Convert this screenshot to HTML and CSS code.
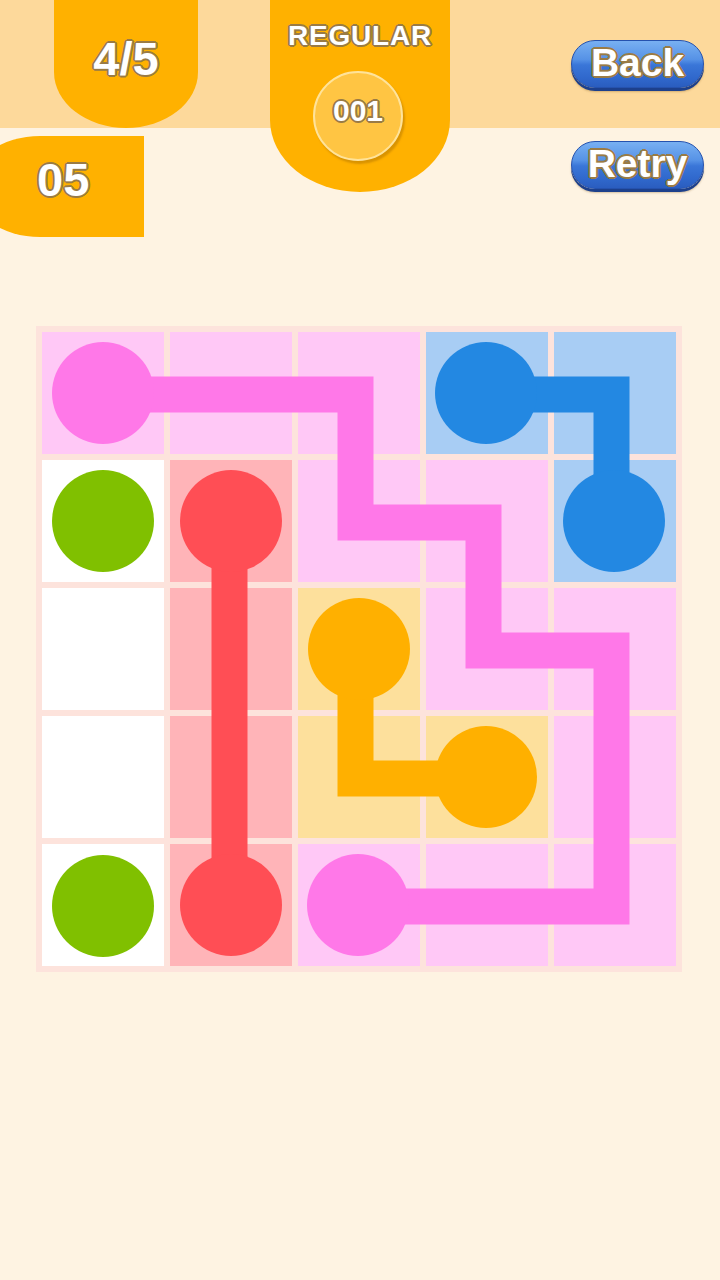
FILE: index.html
```html
<!DOCTYPE html>
<html>
<head>
<meta charset="utf-8">
<link rel="stylesheet" href="styles.css">
</head>
<body>
<header class="top">
  <div class="left">
    <div class="tab-score outlined">4/5</div>
    <div class="tab-moves outlined">05</div>
  </div>
  <div class="tab-level">
    <div class="level-name outlined">REGULAR</div>
    <div class="level-num"><span class="outlined">001</span></div>
  </div>
  <div class="buttons">
    <div class="btn"><span class="outlined">Back</span></div>
    <div class="btn"><span class="outlined">Retry</span></div>
  </div>
</header>

<main class="board">
  <div class="grid">
    <div class="cell pink"></div><div class="cell pink"></div><div class="cell pink"></div><div class="cell blue"></div><div class="cell blue"></div>
    <div class="cell white"></div><div class="cell red"></div><div class="cell pink"></div><div class="cell pink"></div><div class="cell blue"></div>
    <div class="cell white"></div><div class="cell red"></div><div class="cell yellow"></div><div class="cell pink"></div><div class="cell pink"></div>
    <div class="cell white"></div><div class="cell red"></div><div class="cell yellow"></div><div class="cell yellow"></div><div class="cell pink"></div>
    <div class="cell white"></div><div class="cell red"></div><div class="cell pink"></div><div class="cell pink"></div><div class="cell pink"></div>
    <svg class="paths" viewBox="0 0 646 646" width="646" height="646">
      <g fill="none" stroke-width="36" stroke-linejoin="miter" stroke-linecap="butt" transform="translate(-1.5 1.5)">
        <polyline stroke="#ff78e8" points="67,67 321,67 321,195 449,195 449,323 577,323 577,579 321,579"/>
        <polyline stroke="#2388e2" points="449,67 577,67 577,195"/>
        <polyline stroke="#ff4e55" points="195,195 195,579"/>
        <polyline stroke="#ffb000" points="321,323 321,451 449,451"/>
      </g>
      <g>
        <circle cx="67" cy="67" r="51" fill="#ff78e8"/>
        <circle cx="322" cy="579" r="51" fill="#ff78e8"/>
        <circle cx="450" cy="67" r="51" fill="#2388e2"/>
        <circle cx="578" cy="195" r="51" fill="#2388e2"/>
        <circle cx="195" cy="195" r="51" fill="#ff4e55"/>
        <circle cx="195" cy="579" r="51" fill="#ff4e55"/>
        <circle cx="323" cy="323" r="51" fill="#ffb000"/>
        <circle cx="450" cy="451" r="51" fill="#ffb000"/>
        <circle cx="67" cy="195" r="51" fill="#80c000"/>
        <circle cx="67" cy="580" r="51" fill="#80c000"/>
      </g>
    </svg>
  </div>
</main>
</body>
</html>
```

FILE: styles.css
```css
html, body {
  margin: 0;
  padding: 0;
}
body {
  width: 720px;
  height: 1280px;
  overflow: hidden;
  background: linear-gradient(#fdd99b 0, #fdd99b 128px, #fef3e2 128px, #fef3e2 100%);
  font-family: "Liberation Sans", Arial, sans-serif;
  font-weight: bold;
  color: #ffffff;
}
.outlined {
  text-shadow:
    2px 0 0 #9a7b45, -2px 0 0 #9a7b45, 0 2px 0 #9a7b45, 0 -2px 0 #9a7b45,
    1.4px 1.4px 0 #9a7b45, -1.4px 1.4px 0 #9a7b45, 1.4px -1.4px 0 #9a7b45, -1.4px -1.4px 0 #9a7b45;
}
.top {
  display: flex;
  align-items: flex-start;
  height: 237px;
}
.left {
  width: 198px;
  display: flex;
  flex-direction: column;
  gap: 8px;
}
.tab-score {
  margin-left: 54px;
  width: 144px;
  height: 128px;
  box-sizing: border-box;
  padding-bottom: 11px;
  background: #ffb100;
  border-radius: 0 0 72px 72px / 0 0 56px 56px;
  display: flex;
  align-items: center;
  justify-content: center;
  font-size: 47px;
  line-height: 1;
}
.tab-moves {
  margin-left: -30px;
  width: 174px;
  height: 101px;
  box-sizing: border-box;
  padding-left: 67px;
  padding-bottom: 14px;
  background: #ffb100;
  border-radius: 70px 0 0 70px / 50px 0 0 50px;
  display: flex;
  align-items: center;
  font-size: 47px;
  line-height: 1;
}
.tab-level {
  margin-left: 72px;
  width: 180px;
  height: 192px;
  background: #ffb100;
  border-radius: 0 0 90px 90px / 0 0 72px 72px;
  display: flex;
  flex-direction: column;
  align-items: center;
}
.level-name {
  margin-top: 22px;
  font-size: 28px;
  line-height: 1;
  letter-spacing: 0.8px;
}
.level-num {
  margin-top: 21px;
  margin-right: 4px;
  width: 90px;
  height: 90px;
  box-sizing: border-box;
  border-radius: 50%;
  background: #ffc543;
  border: 2px solid #ffe39a;
  box-shadow: 2px 3px 2px rgba(170, 110, 0, 0.45);
  display: flex;
  align-items: center;
  justify-content: center;
  padding-bottom: 10px;
  font-size: 30px;
  line-height: 1;
}
.buttons {
  margin-left: auto;
  margin-right: 16px;
  padding-top: 40px;
  display: flex;
  flex-direction: column;
  gap: 53px;
}
.btn {
  width: 133px;
  height: 48px;
  box-sizing: border-box;
  border-radius: 25px;
  background: linear-gradient(#78b0f2 0%, #5692e6 40%, #3a76d8 52%, #3068cc 80%, #2a5dbf 100%);
  border: 1px solid #2552ae;
  box-shadow: 0 3px 0 #1d408c, 0 4px 2px rgba(120, 80, 20, 0.3);
  display: flex;
  align-items: center;
  justify-content: center;
  padding-bottom: 3px;
  font-size: 39px;
  line-height: 1;
}
.board {
  margin-top: 89px;
  padding-left: 36px;
  display: flex;
}
.grid {
  position: relative;
  width: 646px;
  height: 646px;
  box-sizing: border-box;
  padding: 6px;
  background: #fde3dc;
  display: grid;
  grid-template-columns: repeat(5, 122px);
  grid-template-rows: repeat(5, 122px);
  gap: 6px;
}
.cell.pink { background: #ffc8f6; }
.cell.white { background: #ffffff; }
.cell.red { background: #ffb4b8; }
.cell.yellow { background: #fde09c; }
.cell.blue { background: #a8cdf4; }
.paths {
  position: absolute;
  left: 0;
  top: 0;
}
```
